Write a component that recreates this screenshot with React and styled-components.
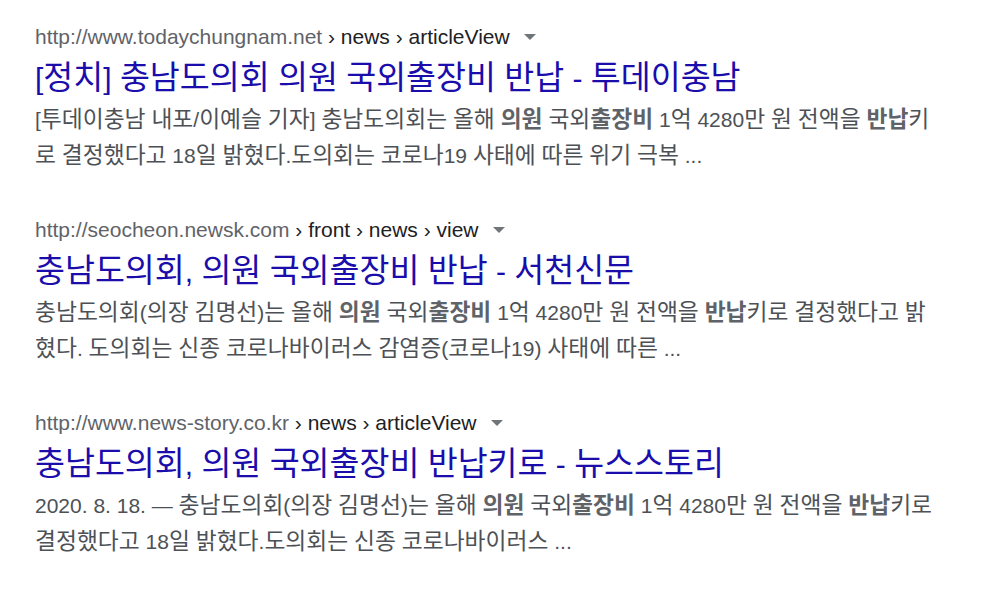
import React from "react";
import styled, { createGlobalStyle } from "styled-components";

const Global = createGlobalStyle`
  html, body { margin: 0; padding: 0; background: #fff; }
  body { font-family: "Liberation Sans", Arial, "Noto Sans CJK KR", sans-serif; }
`;

const Page = styled.div`
  display: flex;
  flex-direction: column;
  gap: 40px;
  padding: 21px 0 0 35px;
`;

const Result = styled.div`
  display: flex;
  flex-direction: column;
`;

const CiteRow = styled.div`
  height: 31px;
  font-size: 21px;
  line-height: 31px;
  white-space: nowrap;
`;

const Domain = styled.span`
  color: #5f6368;
`;

const Crumbs = styled.span`
  color: #202124;
`;

const Arrow = styled.span`
  display: inline-block;
  vertical-align: middle;
  margin-left: 14px;
  margin-top: -3px;
  width: 0;
  height: 0;
  border-left: 6px solid transparent;
  border-right: 6px solid transparent;
  border-top: 6px solid #70757a;
`;

const Title = styled.a`
  display: block;
  margin-top: 7px;
  font-size: 30px;
  line-height: 39px;
  color: #1a0dab;
  text-decoration: none;
  white-space: nowrap;
`;

const Snippet = styled.div`
  margin-top: 4px;
  font-size: 21px;
  line-height: 36px;
  color: #4d5156;
  white-space: nowrap;
`;

const B = styled.b`
  color: #5f6368;
  font-weight: 700;
`;

const Ko = styled.span`
  font-size: 108.5%;
  line-height: 1;
`;

function k(text) {
  const parts = text.split(/([\uAC00-\uD7A3\u3131-\u318E]+)/);
  return parts.map((p, i) => (i % 2 === 1 ? <Ko key={i}>{p}</Ko> : p));
}

const results = [
  {
    domain: "http://www.todaychungnam.net",
    crumbs: "\u00a0› news › articleView",
    title: "[정치] 충남도의회 의원 국외출장비 반납 - 투데이충남",
    snippet: (
      <>
        {k("[투데이충남 내포/이예슬 기자] 충남도의회는 올해 ")}<B>{k("의원")}</B>{k(" 국외")}<B>{k("출장비")}</B>{k(" 1억 4280만 원 전액을 ")}<B>{k("반납")}</B>{k("키")}
        <br />
        {k("로 결정했다고 18일 밝혔다.도의회는 코로나19 사태에 따른 위기 극복 ...")}
      </>
    ),
  },
  {
    domain: "http://seocheon.newsk.com",
    crumbs: "\u00a0› front › news › view",
    title: "충남도의회, 의원 국외출장비 반납 - 서천신문",
    snippet: (
      <>
        {k("충남도의회(의장 김명선)는 올해 ")}<B>{k("의원")}</B>{k(" 국외")}<B>{k("출장비")}</B>{k(" 1억 4280만 원 전액을 ")}<B>{k("반납")}</B>{k("키로 결정했다고 밝")}
        <br />
        {k("혔다. 도의회는 신종 코로나바이러스 감염증(코로나19) 사태에 따른 ...")}
      </>
    ),
  },
  {
    domain: "http://www.news-story.co.kr",
    crumbs: "\u00a0› news › articleView",
    title: "충남도의회, 의원 국외출장비 반납키로 - 뉴스스토리",
    snippet: (
      <>
        {k("2020. 8. 18. — 충남도의회(의장 김명선)는 올해 ")}<B>{k("의원")}</B>{k(" 국외")}<B>{k("출장비")}</B>{k(" 1억 4280만 원 전액을 ")}<B>{k("반납")}</B>{k("키로")}
        <br />
        {k("결정했다고 18일 밝혔다.도의회는 신종 코로나바이러스 ...")}
      </>
    ),
  },
];

export default function App() {
  return (
    <>
      <Global />
      <Page>
        {results.map((r, i) => (
          <Result key={i}>
            <CiteRow>
              <Domain>{r.domain}</Domain>
              <Crumbs>{r.crumbs}</Crumbs>
              <Arrow />
            </CiteRow>
            <Title href="#">{k(r.title)}</Title>
            <Snippet>{r.snippet}</Snippet>
          </Result>
        ))}
      </Page>
    </>
  );
}
